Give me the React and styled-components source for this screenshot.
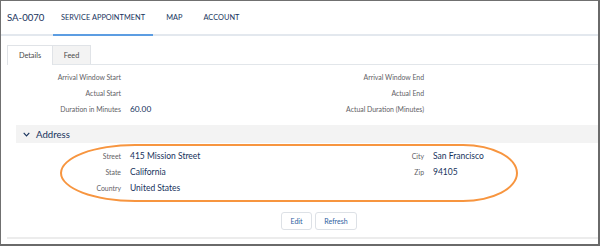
import styled, { createGlobalStyle } from "styled-components"

const Global = createGlobalStyle`
  html, body {
    margin: 0;
    padding: 0;
    background: #ffffff;
  }
  * {
    box-sizing: border-box;
  }
`

const Frame = styled.div`
  position: relative;
  width: 600px;
  height: 246px;
  overflow: hidden;
  background: #ffffff;
  border-top: 1px solid #707070;
  border-left: 1px solid #707070;
  border-right: 2px solid #6a6a6a;
  border-bottom: 2px solid #6a6a6a;
  font-family: Lato, "Open Sans", "Liberation Sans", sans-serif;
  color: #16325c;
`

const Header = styled.div`
  display: flex;
  align-items: stretch;
  height: 35px;
  border-bottom: 2px solid #e3e8ee;
  padding-left: 6px;
`

const Title = styled.div`
  display: flex;
  align-items: center;
  flex-shrink: 0;
  width: 46px;
  white-space: nowrap;
  font-size: 9.6px;
  color: #16325c;
`

const NavTab = styled.div`
  display: flex;
  align-items: center;
  padding: 0 8px;
  margin-right: 5px;
  white-space: nowrap;
  font-size: 7.35px;
  letter-spacing: 0.05px;
  color: #16325c;
  margin-bottom: -2px;
  border-bottom: 2px solid ${p => (p.$active ? "#5c9de2" : "transparent")};
`

const Card = styled.div`
  margin: 9px 0 0 6px;
  height: 194px;
  border-bottom: 2px solid #ececec;
  display: flex;
  flex-direction: column;
`

const SubTabs = styled.div`
  display: flex;
  height: 20px;
  border-bottom: 1px solid #e2e6ea;
`

const SubTab = styled.div`
  display: flex;
  align-items: center;
  justify-content: center;
  width: ${p => p.$w}px;
  font-size: 7.3px;
  color: #4a4a4a;
  background: ${p => (p.$active ? "#ffffff" : "#f3f3f3")};
  border: 1px solid #e0e3e7;
  border-bottom: none;
  margin-bottom: ${p => (p.$active ? "-1px" : "0")};
  border-left-width: ${p => (p.$active ? "1px" : "0")};
`

const Fields = styled.div`
  display: grid;
  grid-template-columns: 114px 161px 124px 1fr;
  column-gap: 9px;
  grid-auto-rows: 16px;
  align-items: center;
  margin-top: ${p => p.$top}px;
  margin-left: -6px;
  padding-left: 6px;
`

const Label = styled.div`
  text-align: right;
  font-size: 6.9px;
  color: #5f6166;
  white-space: nowrap;
`

const Value = styled.div`
  font-size: ${p => (p.$big ? "8.5px" : "8.3px")};
  color: #16325c;
  white-space: nowrap;
`

const Section = styled.div`
  display: flex;
  align-items: center;
  gap: 6px;
  height: 18px;
  margin: 8px 0 0 9px;
  padding-left: 7px;
  background: #f3f3f3;
  font-size: 9.6px;
  color: #16325c;
`

const Buttons = styled.div`
  display: flex;
  gap: 3px;
  margin-top: 16px;
  padding-left: 274px;
`

const Button = styled.div`
  display: flex;
  align-items: center;
  justify-content: center;
  height: 18px;
  width: ${p => p.$w}px;
  border: 1px solid #dde1e6;
  border-radius: 3px;
  font-size: 7px;
  color: #2c5e9e;
  background: #ffffff;
`

const Highlight = styled.div`
  position: absolute;
  left: 59px;
  top: 143px;
  width: 458px;
  height: 58px;
  border: 2px solid #f7953f;
  border-radius: 75px 55px 55px 75px / 29px;
  pointer-events: none;
`

function Chevron() {
  return (
    <svg width="7" height="5" viewBox="0 0 7 5">
      <path d="M0.7 0.9 L3.5 3.9 L6.3 0.9" fill="none" stroke="#16325c" strokeWidth="1.1" />
    </svg>
  )
}

function App() {
  return (
    <Frame>
      <Global />
      <Header>
        <Title>SA-0070</Title>
        <NavTab $active>SERVICE APPOINTMENT</NavTab>
        <NavTab>MAP</NavTab>
        <NavTab>ACCOUNT</NavTab>
      </Header>
      <Card>
        <SubTabs>
          <SubTab $active $w={46}>Details</SubTab>
          <SubTab $w={38}>Feed</SubTab>
        </SubTabs>
        <Fields $top={4}>
          <Label>Arrival Window Start</Label>
          <Value />
          <Label>Arrival Window End</Label>
          <Value />
          <Label>Actual Start</Label>
          <Value />
          <Label>Actual End</Label>
          <Value />
          <Label>Duration in Minutes</Label>
          <Value>60.00</Value>
          <Label>Actual Duration (Minutes)</Label>
          <Value />
        </Fields>
        <Section>
          <Chevron />
          Address
        </Section>
        <Fields $top={5}>
          <Label>Street</Label>
          <Value $big>415 Mission Street</Value>
          <Label>City</Label>
          <Value $big>San Francisco</Value>
          <Label>State</Label>
          <Value $big>California</Value>
          <Label>Zip</Label>
          <Value $big>94105</Value>
          <Label>Country</Label>
          <Value $big>United States</Value>
        </Fields>
        <Buttons>
          <Button $w={31}>Edit</Button>
          <Button $w={42}>Refresh</Button>
        </Buttons>
      </Card>
      <Highlight />
    </Frame>
  )
}

export default App
